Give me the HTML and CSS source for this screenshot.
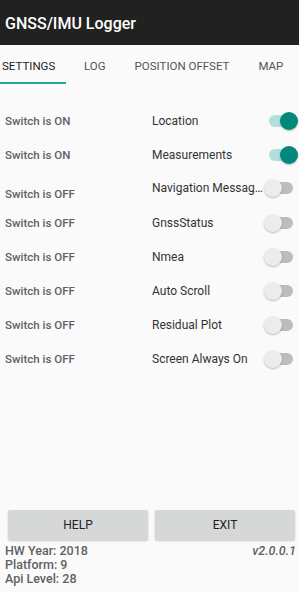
FILE: index.html
```html
<!DOCTYPE html>
<html lang="en">
<head>
  <meta charset="UTF-8" />
  <meta name="viewport" content="width=device-width, initial-scale=1.0"/>
  <title>GNSS/IMU Logger</title>
  <link rel="stylesheet" href="styles.css">
</head>
<body>

<div class="app">
  <header class="toolbar">GNSS/IMU Logger</header>

  <nav class="tabs">
    <div class="tab active">SETTINGS</div>
    <div class="tab first-after">LOG</div>
    <div class="tab">POSITION OFFSET</div>
    <div class="tab">MAP</div>
  </nav>

  <div class="settings">
    <div class="row">
      <span class="state">Switch is ON</span>
      <span class="label">Location</span>
      <span class="switch on"></span>
    </div>
    <div class="row">
      <span class="state">Switch is ON</span>
      <span class="label">Measurements</span>
      <span class="switch on"></span>
    </div>
    <div class="row">
      <span class="state low">Switch is OFF</span>
      <span class="label high">Navigation Messag…</span>
      <span class="switch high"></span>
    </div>
    <div class="row">
      <span class="state">Switch is OFF</span>
      <span class="label">GnssStatus</span>
      <span class="switch"></span>
    </div>
    <div class="row">
      <span class="state">Switch is OFF</span>
      <span class="label">Nmea</span>
      <span class="switch"></span>
    </div>
    <div class="row">
      <span class="state">Switch is OFF</span>
      <span class="label">Auto Scroll</span>
      <span class="switch"></span>
    </div>
    <div class="row">
      <span class="state">Switch is OFF</span>
      <span class="label">Residual Plot</span>
      <span class="switch"></span>
    </div>
    <div class="row">
      <span class="state">Switch is OFF</span>
      <span class="label">Screen Always On</span>
      <span class="switch"></span>
    </div>
  </div>

  <div class="bottom">
    <div class="buttons">
      <button>HELP</button>
      <button>EXIT</button>
    </div>
    <div class="info">
      <div>
        <div>HW Year: 2018</div>
        <div>Platform: 9</div>
        <div>Api Level: 28</div>
      </div>
      <div class="version">v2.0.0.1</div>
    </div>
  </div>
</div>

</body>
</html>
```

FILE: styles.css
```css
* { box-sizing: border-box; }

body {
  margin: 0;
  font-family: Roboto, 'Liberation Sans', sans-serif;
  background: #fafafa;
  color: #333;
}

.app {
  width: 299px;
  height: 592px;
  display: flex;
  flex-direction: column;
  overflow: hidden;
}

.toolbar {
  height: 45px;
  background: #212121;
  color: #fff;
  font-size: 16px;
  font-weight: 500;
  padding: 14px 0 0 5px;
}

.tabs {
  display: flex;
  height: 39px;
  font-size: 11.5px;
  color: #555;
  white-space: nowrap;
}

.tab {
  padding-top: 14px;
  margin-left: 29px;
}

.tab.active {
  width: 66px;
  margin-left: 0;
  padding-left: 2px;
  color: #222;
  border-bottom: 2px solid #26a69a;
}

.tab.first-after { margin-left: 18px; }

.settings {
  flex: 1;
  padding-top: 19px;
}

.row {
  display: flex;
  align-items: center;
  height: 34px;
  font-size: 12px;
}

.row:first-child { height: 35px; }

.state {
  width: 147px;
  padding-left: 5px;
  color: #616161;
  font-size: 11.5px;
  font-weight: 500;
}

.label {
  width: 117px;
  padding-left: 5px;
  color: #333;
  white-space: nowrap;
}

.low { position: relative; top: 5px; }
.high { position: relative; top: -1px; }

.switch {
  position: relative;
  width: 24px;
  height: 12px;
  margin-left: 5px;
  border-radius: 6px;
  background: #bdbdbd;
}

.switch::after {
  content: "";
  position: absolute;
  left: -5px;
  top: -3px;
  width: 18px;
  height: 18px;
  border-radius: 50%;
  background: #ececec;
  box-shadow: 0 1px 2px rgba(0, 0, 0, 0.25);
}

.switch.on { background: #b2dfdb; }

.switch.on::after {
  left: 11px;
  background: #00897b;
}

.bottom {
  padding: 0 3px 6px 8px;
}

.buttons {
  display: flex;
  gap: 7px;
  padding-right: 1px;
}

button {
  flex: 1;
  height: 30px;
  border: none;
  border-radius: 2px;
  background: #d6d7d7;
  color: #222;
  font-family: Roboto, 'Liberation Sans', sans-serif;
  font-size: 12px;
  box-shadow: 0 1px 2px rgba(0, 0, 0, 0.2);
}

.info {
  display: flex;
  justify-content: space-between;
  margin: 4px 0 0 -3px;
  font-size: 12.5px;
  line-height: 14px;
  color: #616161;
  font-weight: 500;
}

.version { font-style: italic; }
```
